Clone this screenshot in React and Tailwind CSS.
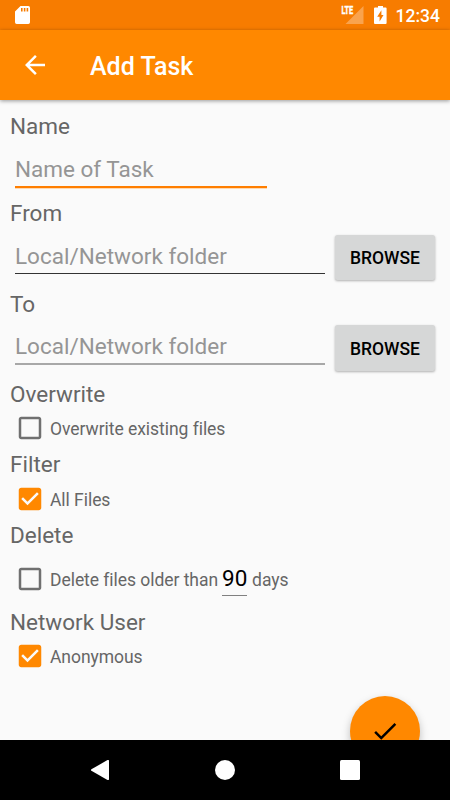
import React from 'react';

function StatusBar() {
  return (
    <div className="flex h-[30px] shrink-0 items-start justify-between bg-[#f77c00] pl-[15px] pr-[10px] text-white">
      <svg className="mt-[6px] h-[18px] w-[15px]" viewBox="0 0 15 18" fill="currentColor">
        <path
          fillRule="evenodd"
          d="M5.5 0H13.3Q15 0 15 1.7V16.3Q15 18 13.3 18H1.7Q0 18 0 16.3V5.5ZM6 2V5.4H7.6V2ZM8.8 2V5.4H10.4V2ZM11.6 2V5.4H13.2V2Z"
        />
      </svg>
      <div className="flex items-start">
        <svg className="h-[30px] w-[23px] overflow-visible" viewBox="0 0 23 30">
          <path d="M22.5 6V24H4.5Z" fill="#fff" fillOpacity="0.3" />
          <text
            x="0.4"
            y="14"
            fontSize="10.8"
            fontWeight="700"
            textLength="11.8"
            lengthAdjust="spacingAndGlyphs"
            fill="#fff"
            stroke="#fff"
            strokeWidth="0.4"
          >
            LTE
          </text>
        </svg>
        <svg className="ml-[10px] mt-[6px] h-[18px] w-[13px]" viewBox="0 0 13 18" fill="currentColor">
          <path
            fillRule="evenodd"
            d="M4 0H9V1.6H11.6Q12.6 1.6 12.6 2.6V17Q12.6 18 11.6 18H1Q0 18 0 17V2.6Q0 1.6 1 1.6H4ZM7.4 4.3L3.2 10.7H5.6V15.6L9.5 9.1H7.4Z"
          />
        </svg>
        <span className="ml-[9px] mt-[6px] text-[17.5px] font-medium leading-[21px]">12:34</span>
      </div>
    </div>
  );
}

function AppBar() {
  return (
    <header className="relative z-10 flex h-[70px] shrink-0 items-center bg-[#ff8800] pl-5 text-white shadow-[0_1px_4px_rgba(0,0,0,0.4)]">
      <svg className="size-[30px]" viewBox="0 0 24 24" fill="currentColor">
        <path d="M20 11H7.83l5.59-5.59L12 4l-8 8 8 8 1.41-1.41L7.83 13H20v-2z" />
      </svg>
      <h1 className="ml-10 mt-[4px] text-[25px] font-medium leading-[30px]">Add Task</h1>
    </header>
  );
}

function Label({ children }) {
  return <h2 className="h-[30px] pl-[10px] text-[22.5px] leading-[30px] text-[#666]">{children}</h2>;
}

function FolderInput({ line }) {
  return (
    <div className={`mt-[6px] w-[310px] text-[22.5px] leading-[30px] text-[#959595] ${line}`}>
      Local/Network folder
    </div>
  );
}

function BrowseButton({ className = 'h-[45px] pt-[1px]' }) {
  return (
    <button
      className={`w-[100px] rounded-[2.5px] bg-[#d6d7d7] text-[17.5px] font-medium leading-[20px] text-black shadow-[0_1px_2.5px_rgba(0,0,0,0.3)] ${className}`}
    >
      BROWSE
    </button>
  );
}

function Checkbox({ checked }) {
  return (
    <svg
      className={checked ? 'size-[30px] text-[#ff8800]' : 'size-[30px] text-[#707070]'}
      viewBox="0 0 24 24"
      fill="currentColor"
    >
      {checked ? (
        <path d="M19 3H5c-1.11 0-2 .9-2 2v14c0 1.1.89 2 2 2h14c1.11 0 2-.9 2-2V5c0-1.1-.89-2-2-2zm-9 14l-5-5 1.41-1.41L10 14.17l7.59-7.59L19 8l-9 9z" />
      ) : (
        <path d="M19 5v14H5V5h14m0-2H5c-1.1 0-2 .9-2 2v14c0 1.1.9 2 2 2h14c1.1 0 2-.9 2-2V5c0-1.1-.9-2-2-2z" />
      )}
    </svg>
  );
}

function Option({ checked, children }) {
  return (
    <div className="flex h-[30px] items-center pl-[15px] text-[17.5px] leading-[22px] tracking-[-0.045px] text-[#666]">
      <Checkbox checked={checked} />
      <span className="ml-[5px] mt-[2px]">{children}</span>
    </div>
  );
}

export default function App() {
  return (
    <div className="flex h-[800px] w-[450px] flex-col overflow-hidden bg-[#fafafa] font-['Roboto',sans-serif]">
      <StatusBar />
      <AppBar />
      <main className="relative min-h-0 flex-1 overflow-hidden pt-[11px]">
        <Label>Name</Label>
        <div className="h-[57px] pl-[15px] pt-[13px]">
          <div className="h-[34px] w-[252px] border-b-2 border-[#ff7e00] text-[22.5px] leading-[30px] text-[#959595] shadow-[0_1px_0_#ffd9b0]">
            Name of Task
          </div>
        </div>
        <Label>From</Label>
        <div className="flex h-[61px] items-start gap-[10px] pl-[15px] pt-[7px]">
          <FolderInput line="h-[33px] border-b border-[#333]" />
          <BrowseButton />
        </div>
        <Label>To</Label>
        <div className="flex h-[60px] items-start gap-[10px] pl-[15px] pt-[6px]">
          <FolderInput line="h-[34px] border-b-2 border-[#a8a8a8]" />
          <BrowseButton className="h-[46px] pt-[2px]" />
        </div>
        <Label>Overwrite</Label>
        <div className="h-[40px] pt-[4px]">
          <Option>Overwrite existing files</Option>
        </div>
        <Label>Filter</Label>
        <div className="h-[41px] pt-[5px]">
          <Option checked>All Files</Option>
        </div>
        <Label>Delete</Label>
        <div className="flex h-[57px] items-start pt-[14px]">
          <Option>Delete files older than</Option>
          <span className="ml-[4px] h-[32px] w-[25px] border-b border-[#808080] text-center text-[22.5px] leading-[28px] text-black">
            90
          </span>
          <span className="ml-[5px] mt-[5px] text-[17.5px] leading-[22px] text-[#666]">days</span>
        </div>
        <Label>Network User</Label>
        <div className="pt-[4px]">
          <Option checked>Anonymous</Option>
        </div>
        <button className="absolute left-[350px] top-[596px] flex size-[70px] items-center justify-center rounded-full bg-[#ff8800] text-black shadow-[0_4px_9px_rgba(0,0,0,0.25)]">
          <svg className="size-[30px]" viewBox="0 0 24 24" fill="currentColor">
            <path d="M9 16.2L4.8 12l-1.4 1.4L9 19 21 7l-1.4-1.4z" />
          </svg>
        </button>
      </main>
      <nav className="flex h-[60px] shrink-0 items-center justify-between bg-black pl-[90px] pr-[90px] text-white">
        <svg className="size-[20px]" viewBox="0 0 20 20" fill="currentColor">
          <path d="M17.5 0.1Q19 -0.5 19 1V19Q19 20.5 17.5 19.9L1.4 10.8Q0.5 10 1.4 9.2Z" />
        </svg>
        <span className="size-[20px] rounded-full bg-white" />
        <span className="size-[20px] rounded-[1.5px] bg-white" />
      </nav>
    </div>
  );
}
